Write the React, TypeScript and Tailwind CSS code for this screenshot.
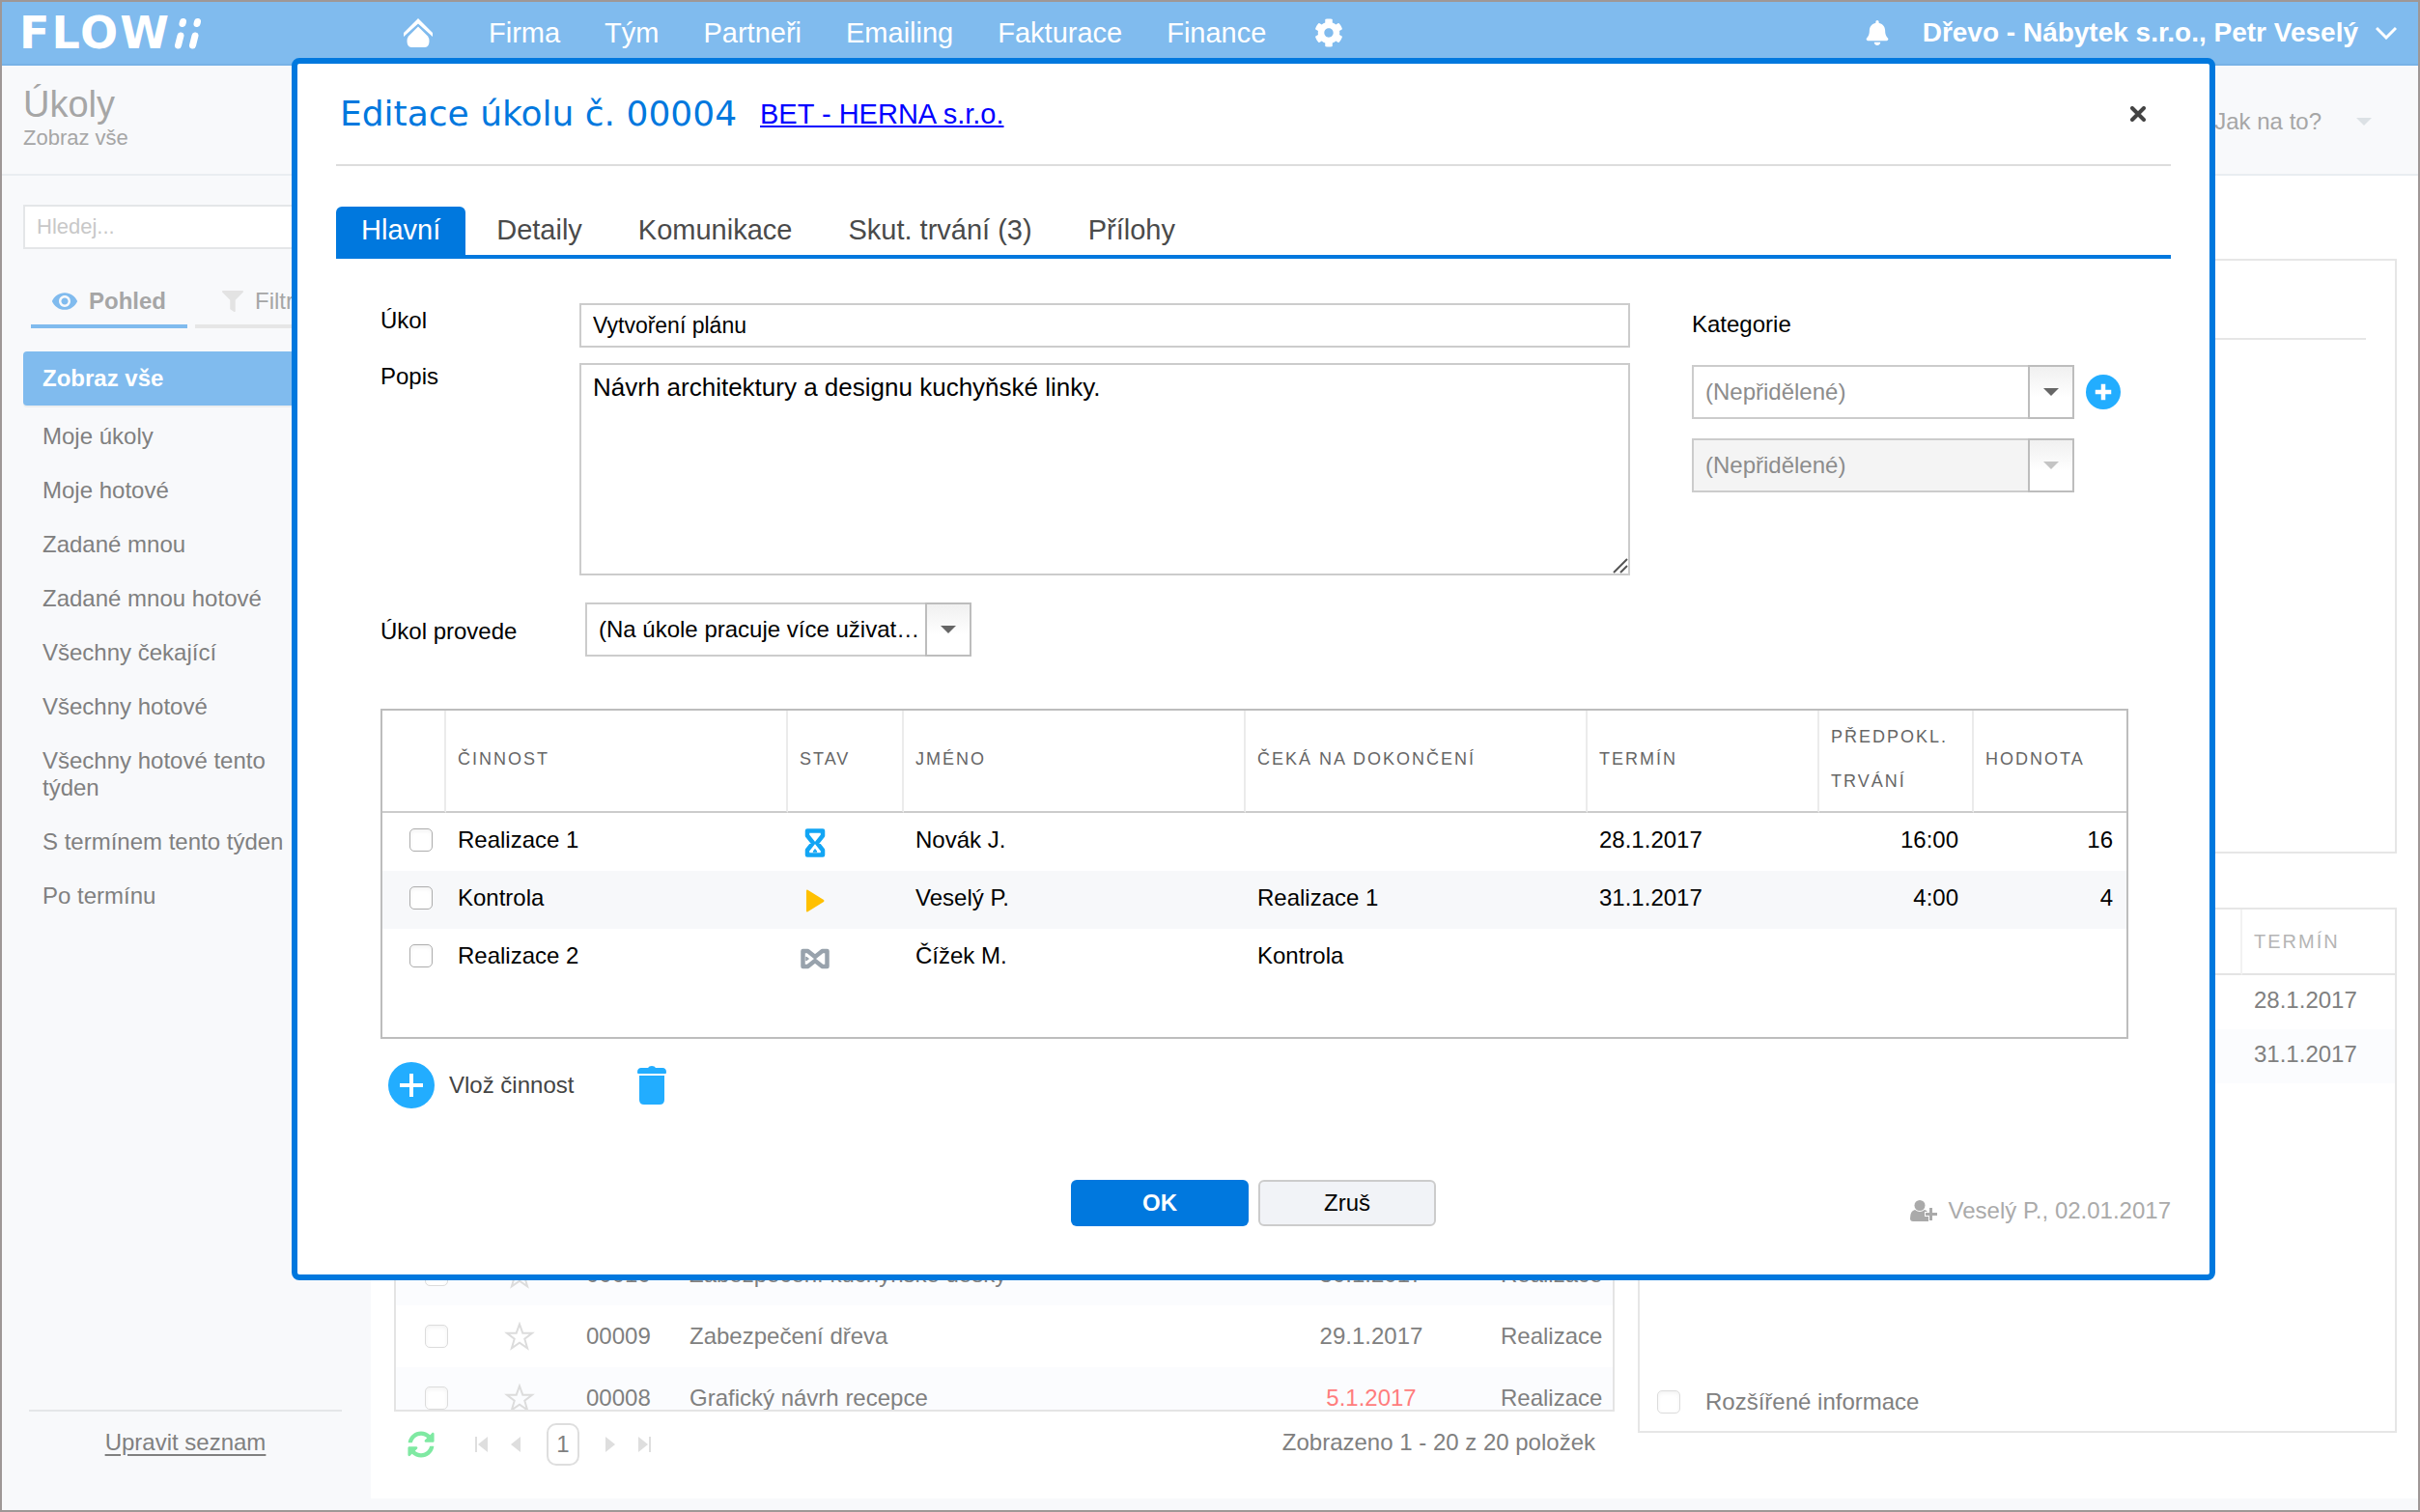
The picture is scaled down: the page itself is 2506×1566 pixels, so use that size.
import React, { useState } from 'react';
import { FaBell, FaCog, FaFilter, FaSyncAlt } from 'react-icons/fa';
import { IoMdEye } from 'react-icons/io';

type Status = 'waiting' | 'running' | 'blocked';

interface Activity {
  name: string;
  status: Status;
  person: string;
  waitsFor: string;
  due: string;
  duration: string;
  value: string;
}

const NAV = ['Firma', 'Tým', 'Partneři', 'Emailing', 'Fakturace', 'Finance'];

const VIEWS = [
  'Moje úkoly',
  'Moje hotové',
  'Zadané mnou',
  'Zadané mnou hotové',
  'Všechny čekající',
  'Všechny hotové',
  'Všechny hotové tento týden',
  'S termínem tento týden',
  'Po termínu',
];

const TASKS = [
  { id: '00010', name: 'Zabezpečení kuchyňské desky', due: '30.1.2017', late: false, type: 'Realizace' },
  { id: '00009', name: 'Zabezpečení dřeva', due: '29.1.2017', late: false, type: 'Realizace' },
  { id: '00008', name: 'Grafický návrh recepce', due: '5.1.2017', late: true, type: 'Realizace' },
];

const TABS = ['Hlavní', 'Detaily', 'Komunikace', 'Skut. trvání (3)', 'Přílohy'];

const ACTIVITIES: Activity[] = [
  { name: 'Realizace 1', status: 'waiting', person: 'Novák J.', waitsFor: '', due: '28.1.2017', duration: '16:00', value: '16' },
  { name: 'Kontrola', status: 'running', person: 'Veselý P.', waitsFor: 'Realizace 1', due: '31.1.2017', duration: '4:00', value: '4' },
  { name: 'Realizace 2', status: 'blocked', person: 'Čížek M.', waitsFor: 'Kontrola', due: '', duration: '', value: '' },
];

const HourglassIcon = ({ className }: { className: string }) => (
  <svg viewBox="0 0 22 30" className={className} fill="none" stroke="currentColor" strokeWidth="4.500" strokeLinejoin="round">
    <path d="M3 2.500h16v5L13 15l6 7.500v5H3v-5L9 15 3 7.500z" />
    <path d="M9 24.200L11 21.500l2 2.700z" fill="currentColor" strokeWidth="1" />
  </svg>
);

const StatusIcon = ({ status }: { status: Status }) => {
  if (status === 'waiting') return <HourglassIcon className="h-[30px] w-[22px] text-[#12a5f4]" />;
  if (status === 'running') {
    return (
      <svg viewBox="0 0 20 24" className="h-6 w-5" fill="#ffc000">
        <path d="M1 1.500q0-1.500 1.500-.8L19 11q1 1 0 2L2.500 23.300Q1 24 1 22.500z" />
      </svg>
    );
  }
  return <HourglassIcon className="h-[30px] w-[22px] rotate-90 text-[#98a2ac]" />;
};

const PlusCircle = ({ className, thin }: { className: string; thin?: boolean }) => (
  <svg viewBox="0 0 48 48" className={className}>
    <circle cx="24" cy="24" r="24" fill="#22adff" />
    <path d={thin ? 'M24 12v24M12 24h24' : 'M24 13v22M13 24h22'} stroke="#fff" strokeWidth={thin ? 4 : 6} />
  </svg>
);

const Caret = ({ className }: { className: string }) => (
  <svg viewBox="0 0 16 8" className={className} fill="currentColor">
    <path d="M0 0h16L8 8z" />
  </svg>
);

interface SelectBoxProps {
  id: string;
  label?: string;
  value: string;
  className: string;
  disabled?: boolean;
}

const SelectBox = ({ id, label, value, className, disabled }: SelectBoxProps) => (
  <div className={`relative h-14 ${className}`}>
    <select
      id={id}
      aria-label={label}
      disabled={disabled}
      className="h-full w-full appearance-none border-2 border-[#ccc] bg-white pl-3 pr-12 opacity-100 disabled:bg-[#f4f4f4]"
    >
      <option>{value}</option>
    </select>
    <span className="pointer-events-none absolute inset-y-0 right-0 flex w-12 items-center justify-center border-2 border-[#bdbdbd] bg-linear-to-b from-[#f0f0f0] to-white to-60%">
      <Caret className={disabled ? 'h-2 w-4 text-[#c4c4c4]' : 'h-2 w-4 text-[#666]'} />
    </span>
  </div>
);

const Checkbox = ({ label, faded }: { label: string; faded?: boolean }) => (
  <input
    type="checkbox"
    aria-label={label}
    className={`block size-6 shrink-0 appearance-none rounded-[5px] border bg-white inset-shadow-sm ${faded ? 'border-[#dcdcdc]' : 'border-[#adadad]'}`}
  />
);

const TopBar = () => (
  <header className="flex h-[66px] items-center border-b-2 border-[#78b2e6] bg-[#80bbee] text-[29px] text-white">
    <a href="#" aria-label="Flowii" className="flex w-[396px] shrink-0 items-center pl-[18px]">
      <span className="font-['DejaVu_Sans',sans-serif] text-[46px] leading-none font-bold tracking-[2px]">FLOW</span>
      <svg viewBox="0 0 32 34" className="h-[34px] w-8" fill="none" stroke="#fff" strokeWidth="7" strokeLinecap="round">
        <path d="M7.500 30l2.500-10M22.500 30l2.500-10" />
        <path d="M12 7.500l.5-2M27 7.500l.5-2" />
      </svg>
    </a>
    <nav className="flex items-center gap-[46px]">
      <a href="#" aria-label="Domů" className="mr-3 ml-5">
        <svg viewBox="0 0 30 30" className="size-[30px]" fill="#fff">
          <path d="M15 0l15 15v4L15 5.500 0 19v-4z" />
          <path d="M15 8.500l10 10q1.500 2 1.500 5 0 6.500-4.500 6.500H8q-4.500 0-4.500-6.500 0-3 1.500-5z" />
        </svg>
      </a>
      {NAV.map((item) => (
        <a key={item} href="#">{item}</a>
      ))}
      <a href="#" aria-label="Nastavení" className="ml-1">
        <FaCog className="size-[30px]" />
      </a>
    </nav>
    <div className="ml-auto flex items-center pr-[22px]">
      <FaBell className="size-[26px]" />
      <button className="ml-[34px] flex items-center gap-[18px] text-[28px] font-bold">
        Dřevo - Nábytek s.r.o., Petr Veselý
        <svg viewBox="0 0 22 14" className="h-[14px] w-[22px]" fill="none" stroke="#fff" strokeWidth="3">
          <path d="M1 2l10 10L21 2" />
        </svg>
      </button>
    </div>
  </header>
);

const Sidebar = () => (
  <aside className="flex w-[382px] shrink-0 flex-col pt-[30px] pr-[30px] pb-14 pl-[22px]">
    <input
      type="search"
      aria-label="Hledej"
      placeholder="Hledej..."
      className="h-[46px] w-full border-2 border-[#e4e6e8] bg-white px-3 text-[22px] placeholder:text-[#c8c8c8]"
    />
    <div className="mt-[30px] flex gap-2 pl-2 text-[#a6a6a6]">
      <button className="flex h-[52px] w-[162px] items-center gap-2.5 border-b-4 border-[#80bbee] pl-5 font-bold">
        <IoMdEye className="size-[30px] text-[#80bbee]" />
        Pohled
      </button>
      <button className="flex h-[52px] flex-1 items-center gap-3 border-b-4 border-[#e6e6e6] pl-7">
        <FaFilter className="size-[22px] text-[#e3e3e3]" />
        Filtr
      </button>
    </div>
    <ul className="mt-6 text-[#808080]">
      <li className="mb-1">
        <a href="#" className="block rounded bg-[#80bbee] px-5 py-[14px] font-bold text-white shadow-[0_2px_0_#eceef0]">Zobraz vše</a>
      </li>
      {VIEWS.map((view) => (
        <li key={view}>
          <a href="#" className="block px-5 py-[14px]">{view}</a>
        </li>
      ))}
    </ul>
    <div className="mt-auto ml-1.5 border-t-2 border-[#e4e6e8] pt-[18px] text-center text-[#808080]">
      <a href="#" className="underline underline-offset-4">Upravit seznam</a>
    </div>
  </aside>
);

const Pager = () => (
  <div className="flex h-[68px] items-center pl-[14px] text-[#dedede]">
    <button aria-label="Obnovit" className="text-[#7fe9a2]">
      <FaSyncAlt className="size-7" />
    </button>
    <button aria-label="První" className="ml-[42px]">
      <svg viewBox="0 0 13 16" className="h-4 w-[13px]" fill="currentColor"><path d="M0 0h2v16H0zM13 0v16L3 8z" /></svg>
    </button>
    <button aria-label="Předchozí" className="ml-6">
      <svg viewBox="0 0 10 16" className="h-4 w-[10px]" fill="currentColor"><path d="M10 0v16L0 8z" /></svg>
    </button>
    <button className="mx-[27px] h-11 w-[34px] rounded-[10px] border-2 border-[#dedede] bg-white text-[#808080]">1</button>
    <button aria-label="Další">
      <svg viewBox="0 0 10 16" className="h-4 w-[10px]" fill="currentColor"><path d="M0 0v16l10-8z" /></svg>
    </button>
    <button aria-label="Poslední" className="ml-6">
      <svg viewBox="0 0 13 16" className="h-4 w-[13px]" fill="currentColor"><path d="M11 0h2v16h-2zM0 0v16l10-8z" /></svg>
    </button>
    <span className="ml-auto pr-5 pb-1 text-[#808080]">Zobrazeno 1 - 20 z 20 položek</span>
  </div>
);

const TaskList = () => (
  <section className="flex flex-1 flex-col">
    <div className="flex flex-1 flex-col justify-end overflow-hidden border-2 border-[#e4e4e4]">
      <table className="-mb-5 w-full table-fixed">
        <colgroup>
          <col className="w-[112px]" />
          <col className="w-[85px]" />
          <col className="w-[107px]" />
          <col />
          <col className="w-[268px]" />
          <col className="w-[116px]" />
        </colgroup>
        <tbody>
          {TASKS.map((task) => (
            <tr key={task.id} className="h-16 odd:bg-[#fbfcfe]">
              <td className="pl-[30px]"><Checkbox label={task.name} faded /></td>
              <td>
                <svg viewBox="0 0 32 30" className="h-[30px] w-8" fill="none" stroke="#dcdcdc" strokeWidth="2">
                  <path d="M16 2.500l3.300 9.200h9.700l-7.700 6 2.800 9.600L16 21.600l-8.100 5.700 2.800-9.600-7.700-6h9.700z" />
                </svg>
              </td>
              <td>{task.id}</td>
              <td>{task.name}</td>
              <td className={task.late ? 'text-center text-[#ff7d7d]' : 'text-center'}>{task.due}</td>
              <td>{task.type}</td>
            </tr>
          ))}
        </tbody>
      </table>
    </div>
    <Pager />
  </section>
);

const DetailColumn = () => (
  <aside className="flex w-[786px] shrink-0 flex-col gap-14 pb-[46px]">
    <div className="h-[616px] border-2 border-[#e6e6e6] px-[30px] pt-20">
      <hr className="border-t-2 border-[#e6e6e6]" />
    </div>
    <div className="flex flex-1 flex-col border-2 border-[#e6e6e6]">
      <table className="w-full border-separate border-spacing-0 text-left">
        <thead>
          <tr className="h-[68px] text-[20px] tracking-[2px] text-[#b5b5b5]">
            <th className="border-r-2 border-b-2 border-r-[#f2f2f2] border-b-[#e4e4e4]" />
            <th className="w-[158px] border-b-2 border-[#e4e4e4] pl-3 font-normal">TERMÍN</th>
          </tr>
        </thead>
        <tbody>
          <tr className="h-14"><td /><td className="pb-1 pl-3">28.1.2017</td></tr>
          <tr className="h-14 bg-[#fbfcfe]"><td /><td className="pb-1 pl-3">31.1.2017</td></tr>
        </tbody>
      </table>
      <label className="mt-auto flex items-center gap-[26px] pb-4 pl-[18px]">
        <Checkbox label="Rozšířené informace" faded />
        Rozšířené informace
      </label>
    </div>
  </aside>
);

const ActivityTable = () => (
  <div className="mt-[54px] min-h-[342px] border-2 border-[#bdbdbd]">
    <table className="w-full table-fixed border-separate border-spacing-0 text-left">
      <colgroup>
        <col className="w-[66px]" />
        <col />
        <col className="w-[120px]" />
        <col />
        <col />
        <col className="w-[240px]" />
        <col className="w-[160px]" />
        <col className="w-[158px]" />
      </colgroup>
      <thead>
        <tr className="h-[106px] text-[18px] leading-[46px] tracking-[2px] text-[#666] *:border-r-2 *:border-b-2 *:border-r-[#ebebeb] *:border-b-[#ccc] *:pb-1 *:pl-3 *:font-normal *:last:border-r-0">
          <th />
          <th>ČINNOST</th>
          <th>STAV</th>
          <th>JMÉNO</th>
          <th>ČEKÁ NA DOKONČENÍ</th>
          <th>TERMÍN</th>
          <th>PŘEDPOKL. TRVÁNÍ</th>
          <th>HODNOTA</th>
        </tr>
      </thead>
      <tbody>
        {ACTIVITIES.map((row) => (
          <tr key={row.name} className="h-[60px] even:bg-[#f7f8fa] *:pb-1 *:pl-3">
            <td><div className="pl-4"><Checkbox label={row.name} /></div></td>
            <td>{row.name}</td>
            <td><div className="flex w-8 justify-center pt-1.5"><StatusIcon status={row.status} /></div></td>
            <td>{row.person}</td>
            <td>{row.waitsFor}</td>
            <td>{row.due}</td>
            <td className="pr-4 text-right">{row.duration}</td>
            <td className="pr-[14px] text-right">{row.value}</td>
          </tr>
        ))}
      </tbody>
    </table>
  </div>
);

const TaskDialog = () => {
  const [tab, setTab] = useState(TABS[0]);

  return (
    <div
      role="dialog"
      aria-labelledby="dialog-title"
      className="absolute top-[58px] right-[210px] left-[300px] z-10 rounded-lg border-6 border-[#0078de] bg-white px-10 pb-[50px] text-black"
    >
      <div className="flex h-[106px] items-center border-b-2 border-[#ddd] pl-1">
        <h2 id="dialog-title" className="font-['DejaVu_Sans',sans-serif] text-[36px] text-[#0078de]">Editace úkolu č. 00004</h2>
        <a href="#" className="ml-6 text-[29px] text-[#0000ff] underline">BET - HERNA s.r.o.</a>
        <button aria-label="Zavřít" className="mr-[26px] ml-auto">
          <svg viewBox="0 0 16 16" className="size-4" stroke="#444" strokeWidth="4" strokeLinecap="round">
            <path d="M2 2l12 12M14 2L2 14" />
          </svg>
        </button>
      </div>

      <div role="tablist" className="mt-[42px] flex h-[54px] gap-1.5 border-b-4 border-[#0078de] text-[29px]">
        {TABS.map((t) => (
          <button
            key={t}
            role="tab"
            aria-selected={t === tab}
            onClick={() => setTab(t)}
            className={`px-[26px] pb-0.5 ${t === tab ? 'rounded-t-md bg-[#0078de] text-white' : 'text-[#4a4a4a]'}`}
          >
            {t}
          </button>
        ))}
      </div>

      <div className="pr-11 pl-[46px]">
        <div className="flex">
          <div className="flex-1 pt-[46px]">
            <div className="flex">
              <label htmlFor="task-name" className="w-[206px] pt-1">Úkol</label>
              <input id="task-name" defaultValue="Vytvoření plánu" className="h-[46px] flex-1 border-2 border-[#ccc] px-3 text-[23px]" />
            </div>
            <div className="mt-4 flex">
              <label htmlFor="task-note" className="w-[206px]">Popis</label>
              <div className="relative h-[220px] flex-1">
                <textarea
                  id="task-note"
                  defaultValue="Návrh architektury a designu kuchyňské linky."
                  className="block h-full w-full resize-none border-2 border-[#ccc] px-3 pt-2 text-[26px] leading-[30px]"
                />
                <svg viewBox="0 0 16 16" className="absolute right-0.5 bottom-0.5 size-4" stroke="#555" strokeWidth="2">
                  <path d="M1 15L15 1M8 15l7-7" />
                </svg>
              </div>
            </div>
            <div className="mt-7 flex items-center">
              <label htmlFor="task-owner" className="w-[212px] pt-1">Úkol provede</label>
              <SelectBox id="task-owner" value="(Na úkole pracuje více uživat…" className="w-[400px]" />
            </div>
          </div>

          <div className="ml-16 w-[452px] pt-[54px]">
            <label htmlFor="category">Kategorie</label>
            <div className="mt-7 flex items-center gap-3 text-[#8c8c8c]">
              <SelectBox id="category" value="(Nepřidělené)" className="w-[396px]" />
              <button aria-label="Přidat kategorii">
                <PlusCircle className="size-9" />
              </button>
            </div>
            <div className="mt-5 text-[#8c8c8c]">
              <SelectBox id="subcategory" label="Podkategorie" value="(Nepřidělené)" className="w-[396px]" disabled />
            </div>
          </div>
        </div>

        <ActivityTable />

        <div className="mt-6 flex h-12 items-center pl-2 text-[#444]">
          <button className="flex items-center gap-[15px]">
            <PlusCircle className="size-12" thin />
            Vlož činnost
          </button>
          <button aria-label="Smazat" className="ml-[66px]">
            <svg viewBox="0 0 30 40" className="h-10 w-[30px]" fill="#22adff">
              <path d="M1 8q-1 0-1-1.500Q0 2 4 2h7q1-2 4-2t4 2h7q4 0 4 4.500Q30 8 29 8z" />
              <path d="M2 10h26v25q0 5-5 5H7q-5 0-5-5z" />
            </svg>
          </button>
        </div>
      </div>

      <div className="mt-[74px] grid grid-cols-[1fr_auto_1fr] items-end">
        <div className="col-start-2 flex gap-[10px]">
          <button className="h-12 w-[184px] rounded-md bg-[#0078de] font-bold text-white">OK</button>
          <button className="h-12 w-[184px] rounded-md border-2 border-[#ccc] bg-[#f1f3f7]">Zruš</button>
        </div>
        <div className="flex items-center justify-end gap-3 pb-0.5 text-[#aaa]">
          <svg viewBox="0 0 28 22" className="h-[22px] w-7" fill="currentColor">
            <circle cx="10" cy="5.500" r="5.500" />
            <path d="M5 10q5 4 10 0 2 .5 3 2h-3v5h4v5H3q-3 0-3-3 0-8 5-9z" />
            <path d="M20 8h3v5h5v3h-5v5h-3v-5h-4v-3h4z" />
          </svg>
          Veselý P., 02.01.2017
        </div>
      </div>
    </div>
  );
};

export default function App() {
  return (
    <div className="relative flex min-h-screen flex-col border-2 border-[#9e9796] bg-[#f8f9fb] font-['Liberation_Sans',Arial,sans-serif] text-[24px] leading-[28px]">
      <TopBar />
      <div className="flex h-[114px] items-center justify-between border-b-2 border-[#e9edf1] pr-12 pl-[22px] text-[#a6a6a6]">
        <div className="pb-1.5">
          <h1 className="text-[38px] leading-[44px]">Úkoly</h1>
          <p className="text-[22px] leading-[26px]">Zobraz vše</p>
        </div>
        <button className="flex items-center gap-9 pt-1">
          Jak na to?
          <Caret className="h-2 w-4 text-[#dce1e5]" />
        </button>
      </div>
      <div className="flex flex-1">
        <Sidebar />
        <main className="mb-3 flex flex-1 gap-6 bg-white pt-[86px] pr-[22px] pb-[22px] pl-6 text-[#808080]">
          <TaskList />
          <DetailColumn />
        </main>
      </div>
      <TaskDialog />
    </div>
  );
}
